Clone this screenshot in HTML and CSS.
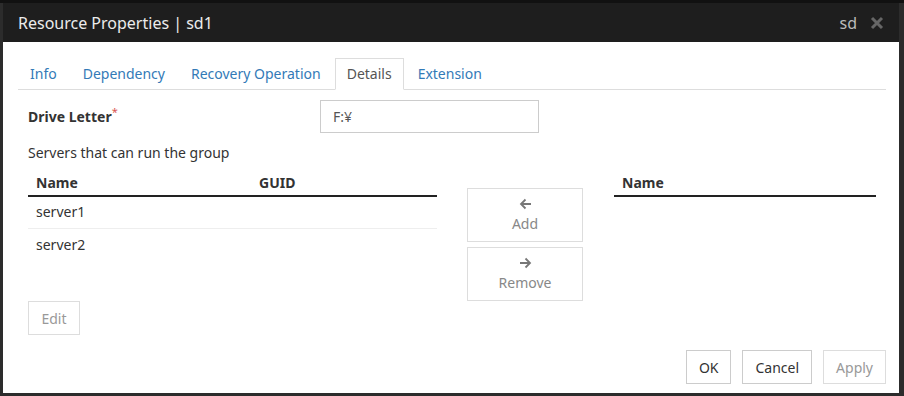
FILE: index.html
```html
<!DOCTYPE html>
<html>
<head>
<meta charset="utf-8">
<link rel="stylesheet" href="styles.css">
</head>
<body>
<div class="frame">
  <div class="dialog">
    <div class="header">
      <div class="title">Resource Properties | sd1</div>
      <div class="header-right">
        <span class="type">sd</span>
        <svg class="close" width="14" height="14" viewBox="0 0 14 14"><path d="M2 2L12 12M12 2L2 12" stroke="#666" stroke-width="3" stroke-linecap="butt"/></svg>
      </div>
    </div>
    <div class="body">
      <ul class="tabs">
        <li><a>Info</a></li>
        <li><a>Dependency</a></li>
        <li><a>Recovery Operation</a></li>
        <li class="active"><a>Details</a></li>
        <li><a>Extension</a></li>
      </ul>
      <div class="form">
        <div class="row-field">
          <label class="label">Drive Letter<span class="req">*</span></label>
          <div class="input">F:¥</div>
        </div>
        <div class="section-title">Servers that can run the group</div>
        <div class="lists">
          <div class="table left">
            <div class="thead">
              <div class="c1">Name</div>
              <div class="c2">GUID</div>
            </div>
            <div class="tr"><div class="c1">server1</div><div class="c2"></div></div>
            <div class="tr last"><div class="c1">server2</div><div class="c2"></div></div>
          </div>
          <div class="movers">
            <button class="mover">
              <svg width="13" height="12" viewBox="0 0 13 12"><path d="M12 6H2M6.5 1.5L2 6L6.5 10.5" fill="none" stroke="#777" stroke-width="1.8"/></svg>
              <span>Add</span>
            </button>
            <button class="mover">
              <svg width="13" height="12" viewBox="0 0 13 12"><path d="M1 6H11M6.5 1.5L11 6L6.5 10.5" fill="none" stroke="#777" stroke-width="1.8"/></svg>
              <span>Remove</span>
            </button>
          </div>
          <div class="table right">
            <div class="thead"><div class="c1">Name</div></div>
          </div>
        </div>
        <button class="btn edit">Edit</button>
      </div>
      <div class="footer">
        <button class="btn">OK</button>
        <button class="btn">Cancel</button>
        <button class="btn disabled">Apply</button>
      </div>
    </div>
  </div>
</div>
</body>
</html>
```
FILE: styles.css
```css
html, body {
  margin: 0;
  padding: 0;
}
body {
  width: 904px;
  height: 396px;
  background: #2c2c2c;
  font-family: "Noto Sans", "Liberation Sans", sans-serif;
  font-size: 14px;
  color: #333;
  overflow: hidden;
}
.frame {
  border-top: 3px solid #111;
  padding: 0 5px 0 3px;
  height: 393px;
  box-sizing: border-box;
}
.dialog {
  background: #fff;
  height: 390px;
  display: flex;
  flex-direction: column;
}
.header {
  background: #1e1e1e;
  height: 39px;
  display: flex;
  align-items: center;
  justify-content: space-between;
  padding: 0 15px;
}
.title {
  color: #ececec;
  font-size: 16px;
}
.header-right {
  display: flex;
  align-items: center;
  gap: 13px;
}
.type {
  color: #bbb;
  font-size: 16px;
}
.close {
  display: block;
}
.body {
  flex: 1;
  display: flex;
  flex-direction: column;
  padding: 16px 13px 0 15px;
}
.tabs {
  list-style: none;
  margin: 0;
  padding: 0;
  display: flex;
  border-bottom: 1px solid #ddd;
}
.tabs li {
  margin-right: 2px;
  margin-bottom: -1px;
}
.tabs a {
  display: block;
  padding: 5px 11px;
  line-height: 20px;
  color: #337ab7;
  border: 1px solid transparent;
  border-bottom: none;
}
.tabs .active a {
  color: #555;
  border-color: #ddd;
  background: #fff;
  border-bottom: 1px solid #fff;
}
.form {
  padding: 10px 10px 0 10px;
}
.row-field {
  display: flex;
  align-items: center;
  height: 33px;
}
.label {
  font-weight: bold;
  width: 292px;
}
.req {
  color: #d9534f;
  font-weight: normal;
  vertical-align: super;
  font-size: 11px;
  line-height: 0;
}
.input {
  width: 219px;
  height: 33px;
  box-sizing: border-box;
  border: 1px solid #ccc;
  padding: 0 12px;
  display: flex;
  align-items: center;
  color: #555;
}
.section-title {
  margin-top: 10px;
  line-height: 20px;
}
.lists {
  display: flex;
  align-items: flex-start;
  margin-top: 2px;
}
.table.left {
  width: 409px;
}
.table.right {
  width: 262px;
  margin-left: 31px;
}
.thead {
  display: flex;
  font-weight: bold;
  border-bottom: 2px solid #222;
  height: 32px;
  box-sizing: border-box;
  align-items: center;
  padding-top: 4px;
}
.tr {
  display: flex;
  height: 32px;
  align-items: center;
  border-bottom: 1px solid #eee;
  box-sizing: border-box;
  padding-bottom: 2px;
}
.tr.last {
  border-bottom: none;
}
.c1 {
  width: 223px;
  padding-left: 8px;
}
.c2 {
  flex: 1;
}
.movers {
  margin-left: 30px;
  margin-top: 23px;
  display: flex;
  flex-direction: column;
  gap: 5px;
}
.mover {
  width: 116px;
  height: 54px;
  background: #fff;
  border: 1px solid #ddd;
  display: flex;
  flex-direction: column;
  align-items: center;
  justify-content: center;
  gap: 4px;
  font-family: inherit;
  font-size: 14px;
  color: #888;
  padding: 0;
}
.mover svg {
  display: block;
}
.btn {
  font-family: inherit;
  font-size: 14px;
  background: #fff;
  border: 1px solid #ccc;
  color: #333;
  height: 34px;
  padding: 0 12px;
}
.btn.edit {
  margin-top: 0;
  color: #999;
  border-color: #ddd;
  width: 52px;
  padding: 0;
}
.btn.disabled {
  color: #999;
  border-color: #ddd;
}
.footer {
  display: flex;
  justify-content: flex-end;
  gap: 11px;
  margin-top: 15px;
}
```
